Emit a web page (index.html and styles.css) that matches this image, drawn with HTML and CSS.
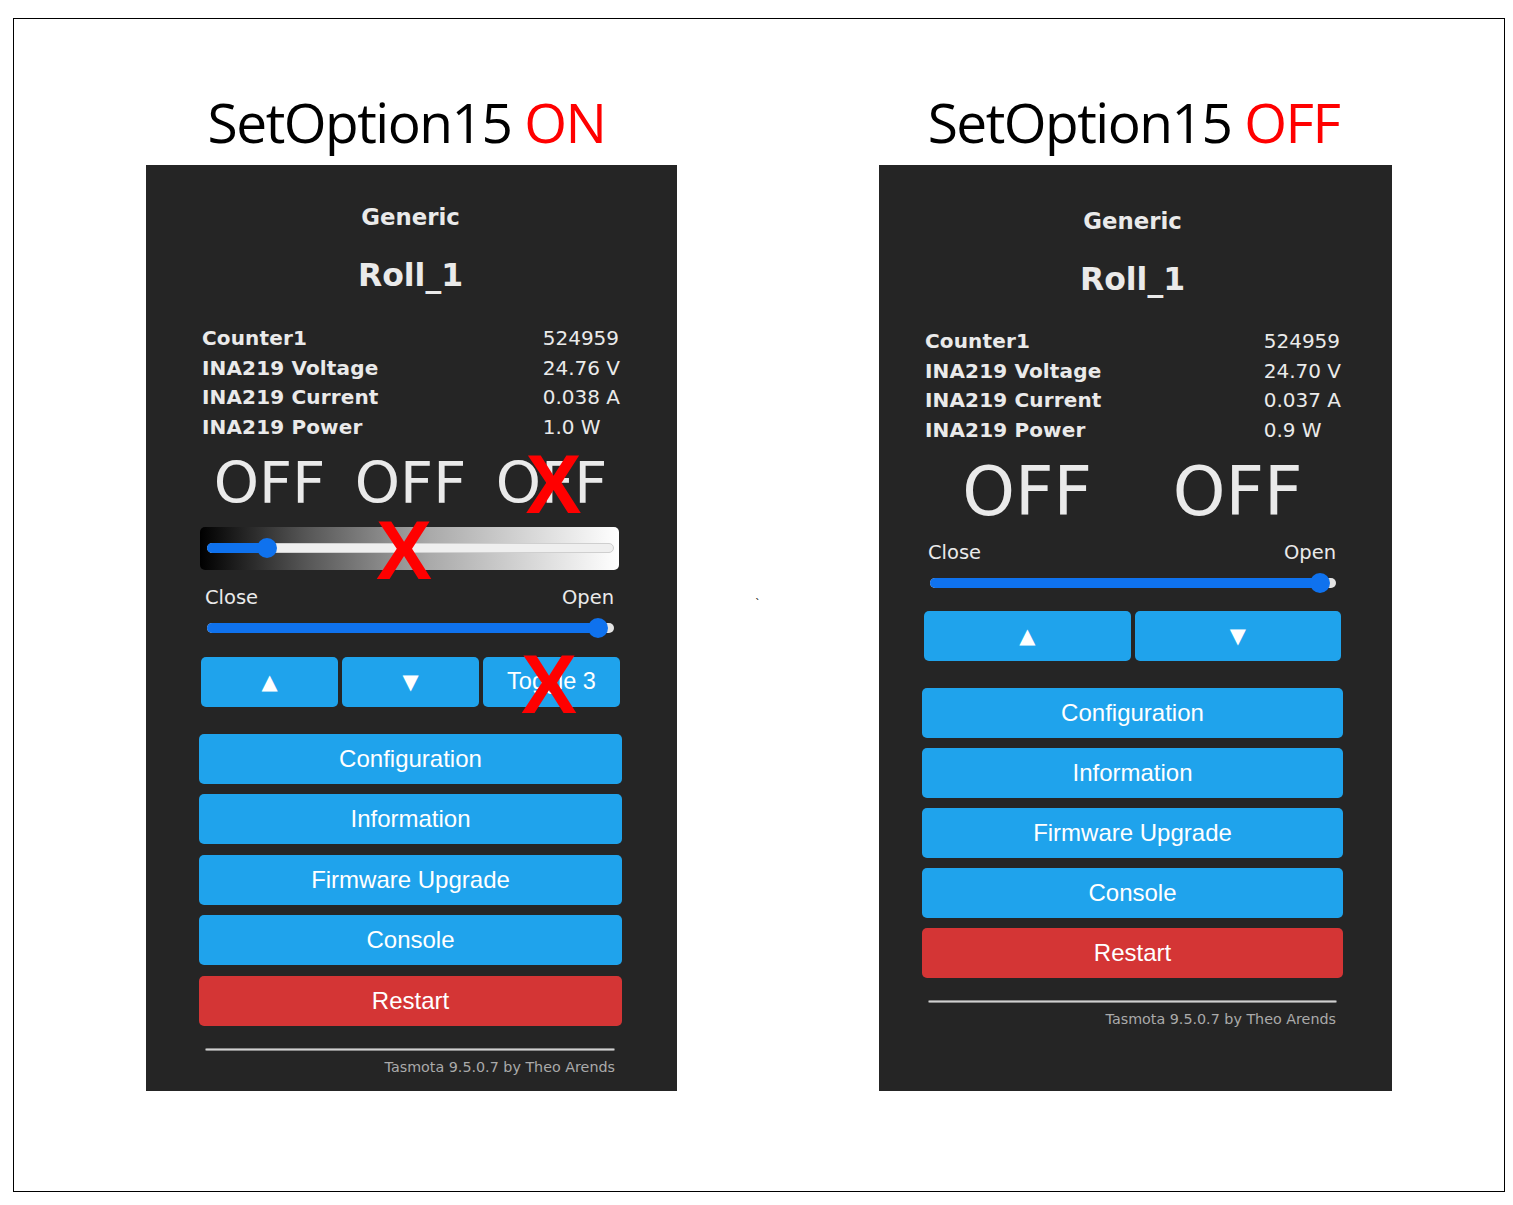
FILE: index.html
```html
<!DOCTYPE html>
<html lang="en">
<head>
<meta charset="utf-8">
<title>SetOption15</title>
<link rel="stylesheet" href="styles.css">
</head>
<body>
<div class="frame">
  <div class="col col-on">
    <div class="title title-on">SetOption15 <span class="red">ON</span></div>
    <div class="panel panel-on">
      <div class="generic">Generic</div>
      <div class="devname">Roll_1</div>
      <div class="sensors">
        <div class="lbl">Counter1</div><div class="val">524959</div>
        <div class="lbl">INA219 Voltage</div><div class="val">24.76 V</div>
        <div class="lbl">INA219 Current</div><div class="val">0.038 A</div>
        <div class="lbl">INA219 Power</div><div class="val">1.0 W</div>
      </div>
      <div class="states states-3">
        <div class="state">OFF</div><div class="state">OFF</div><div class="state">OFF</div>
      </div>
      <div class="grad">
        <div class="range range-light">
          <div class="fill" style="width: 14.7%"></div>
          <div class="thumb" style="left: 14.7%"></div>
        </div>
      </div>
      <div class="labels"><span>Close</span><span>Open</span></div>
      <div class="range range-pos">
        <div class="fill" style="width: 96%"></div>
        <div class="thumb" style="left: 96%"></div>
      </div>
      <div class="btnrow">
        <div class="btn small">&#9650;</div>
        <div class="btn small">&#9660;</div>
        <div class="btn small toggle">Toggle 3</div>
      </div>
      <div class="menu">
        <div class="btn big">Configuration</div>
        <div class="btn big">Information</div>
        <div class="btn big">Firmware Upgrade</div>
        <div class="btn big">Console</div>
        <div class="btn big restart">Restart</div>
      </div>
      <div class="rule"></div>
      <div class="footer">Tasmota 9.5.0.7 by Theo Arends</div>
      <span class="xmark x1">X</span>
      <span class="xmark x2">X</span>
      <span class="xmark x3">X</span>
    </div>
  </div>
  <div class="spacer"><span class="tick">`</span></div>
  <div class="col col-off">
    <div class="title title-off">SetOption15 <span class="red">OFF</span></div>
    <div class="panel panel-off">
      <div class="generic">Generic</div>
      <div class="devname">Roll_1</div>
      <div class="sensors">
        <div class="lbl">Counter1</div><div class="val">524959</div>
        <div class="lbl">INA219 Voltage</div><div class="val">24.70 V</div>
        <div class="lbl">INA219 Current</div><div class="val">0.037 A</div>
        <div class="lbl">INA219 Power</div><div class="val">0.9 W</div>
      </div>
      <div class="states states-2">
        <div class="state">OFF</div><div class="state">OFF</div>
      </div>
      <div class="labels"><span>Close</span><span>Open</span></div>
      <div class="range range-pos">
        <div class="fill" style="width: 96%"></div>
        <div class="thumb" style="left: 96%"></div>
      </div>
      <div class="btnrow">
        <div class="btn small">&#9650;</div>
        <div class="btn small">&#9660;</div>
      </div>
      <div class="menu">
        <div class="btn big">Configuration</div>
        <div class="btn big">Information</div>
        <div class="btn big">Firmware Upgrade</div>
        <div class="btn big">Console</div>
        <div class="btn big restart">Restart</div>
      </div>
      <div class="rule"></div>
      <div class="footer">Tasmota 9.5.0.7 by Theo Arends</div>
    </div>
  </div>
</div>
</body>
</html>
```
FILE: styles.css
```css
html, body {
  margin: 0;
  padding: 0;
  background: #ffffff;
}

.frame {
  box-sizing: border-box;
  margin: 18px 0 0 13px;
  width: 1492px;
  height: 1174px;
  border: 1px solid #000;
  display: flex;
  padding-left: 132px;
}

.col {
  display: flex;
  flex-direction: column;
}
.col-on { width: 531px; }
.col-off { width: 513px; }

.spacer {
  width: 202px;
  box-sizing: border-box;
  padding: 574px 0 0 78px;
}
.tick {
  font-family: "DejaVu Sans", sans-serif;
  font-size: 11px;
  color: #000;
}

.title {
  box-sizing: border-box;
  height: 146px;
  padding-top: 63px;
  font-family: "Open Sans", "Noto Sans", sans-serif;
  font-size: 55px;
  line-height: 80px;
  letter-spacing: -1.5px;
  color: #000;
  text-align: center;
  white-space: nowrap;
}
.title-on { padding-right: 10px; }
.title-off { padding-right: 4px; }
.red { color: #ff0000; }

.panel {
  position: relative;
  box-sizing: border-box;
  height: 926px;
  background: #252525;
  color: #eaeaea;
  font-family: "DejaVu Sans", Verdana, sans-serif;
  display: flex;
  flex-direction: column;
}
.panel-on { padding: 37px 55px 0 53px; }
.panel-off { padding: 41px 49px 0 43px; }

.generic {
  text-align: center;
  font-weight: bold;
  font-size: 22.8px;
  line-height: 30px;
}
.devname {
  margin-top: 23px;
  text-align: center;
  font-weight: bold;
  font-size: 31.5px;
  line-height: 40px;
}

.sensors {
  margin-top: 29px;
  padding: 0 2px 0 3px;
  display: grid;
  grid-template-columns: 1fr auto;
  line-height: 29.6px;
}
.panel-off .sensors { margin-top: 28px; }
.lbl {
  font-weight: bold;
  font-size: 20px;
  letter-spacing: 0.15px;
}
.val {
  font-size: 20px;
}

.states {
  display: grid;
  text-align: center;
}
.states-3 {
  grid-template-columns: 1fr 1fr 1fr;
  margin-top: 12px;
  font-size: 57.5px;
  line-height: 60px;
}
.states-2 {
  grid-template-columns: 1fr 1fr;
  margin-top: 11.6px;
  font-size: 67px;
  line-height: 70px;
}

.grad {
  margin: 12.4px 3px 0 1px;
  height: 43px;
  border-radius: 5px;
  background: linear-gradient(to right, #000 0%, #555 25%, #aaa 55%, #fff 100%);
  display: flex;
  align-items: center;
  padding: 0 5px 0 7px;
}

.range {
  position: relative;
  height: 20px;
  display: flex;
  align-items: center;
}
.range::before {
  content: "";
  position: absolute;
  left: 0;
  right: 0;
  top: 5px;
  height: 10px;
  border-radius: 5px;
  background: #e4e4e4;
}
.range-light {
  flex: 1;
}
.range-light::before {
  background: #efefef;
  box-sizing: border-box;
  border: 1px solid #cfcfcf;
}
.range-pos {
  margin: 7.5px 8px 0 8px;
}
.panel-off .range-pos {
  margin: 7.6px 7px 0 8px;
}
.fill {
  position: relative;
  height: 10px;
  border-radius: 5px;
  background: #0f72ee;
}
.thumb {
  position: absolute;
  top: 0;
  width: 20px;
  height: 20px;
  margin-left: -10px;
  border-radius: 50%;
  background: #0f72ee;
}

.labels {
  margin: 16.5px 8px 0 6px;
  display: flex;
  justify-content: space-between;
  font-size: 19.5px;
  line-height: 24px;
}
.panel-off .labels {
  margin: 14.4px 7px 0 6px;
}

.btn {
  box-sizing: border-box;
  height: 50px;
  border-radius: 5px;
  background: #1fa3ec;
  color: #fff;
  display: flex;
  align-items: center;
  justify-content: center;
  font-family: "Liberation Sans", Arial, sans-serif;
  font-size: 24px;
}
.btnrow {
  margin: 19px 2px 0 2px;
  display: flex;
  gap: 4px;
}
.panel-off .btnrow { margin-top: 18px; }
.small {
  flex: 1;
  font-family: "DejaVu Sans", sans-serif;
  font-size: 21px;
}
.small.toggle {
  font-family: "Liberation Sans", Arial, sans-serif;
  font-size: 23.5px;
}

.menu {
  margin-top: 27px;
  display: flex;
  flex-direction: column;
  gap: 10.5px;
}
.panel-off .menu { gap: 10px; }
.restart { background: #d43535; }

.rule {
  margin: 22.5px 7px 0 6px;
  box-sizing: border-box;
  height: 3px;
  border: 1px solid #8a8a8a;
  border-radius: 2px;
  background: #d0d0d0;
}
.panel-off .rule { margin: 22.5px 6px 0 6px; }

.footer {
  margin: 6.75px 7px 0 0;
  text-align: right;
  font-size: 14.3px;
  line-height: 18px;
  color: #aaaaaa;
}
.panel-off .footer { margin-right: 7px; }

.xmark {
  position: absolute;
  width: 60px;
  height: 88px;
  text-align: center;
  font-family: "Liberation Sans Narrow", "Liberation Sans", Arial, sans-serif;
  font-weight: bold;
  font-size: 84px;
  line-height: 88px;
  color: #ff0000;
}
.x1 { left: 228px; top: 341px; }
.x2 { left: 377.5px; top: 275px; }
.x3 { left: 373px; top: 475px; }
```
